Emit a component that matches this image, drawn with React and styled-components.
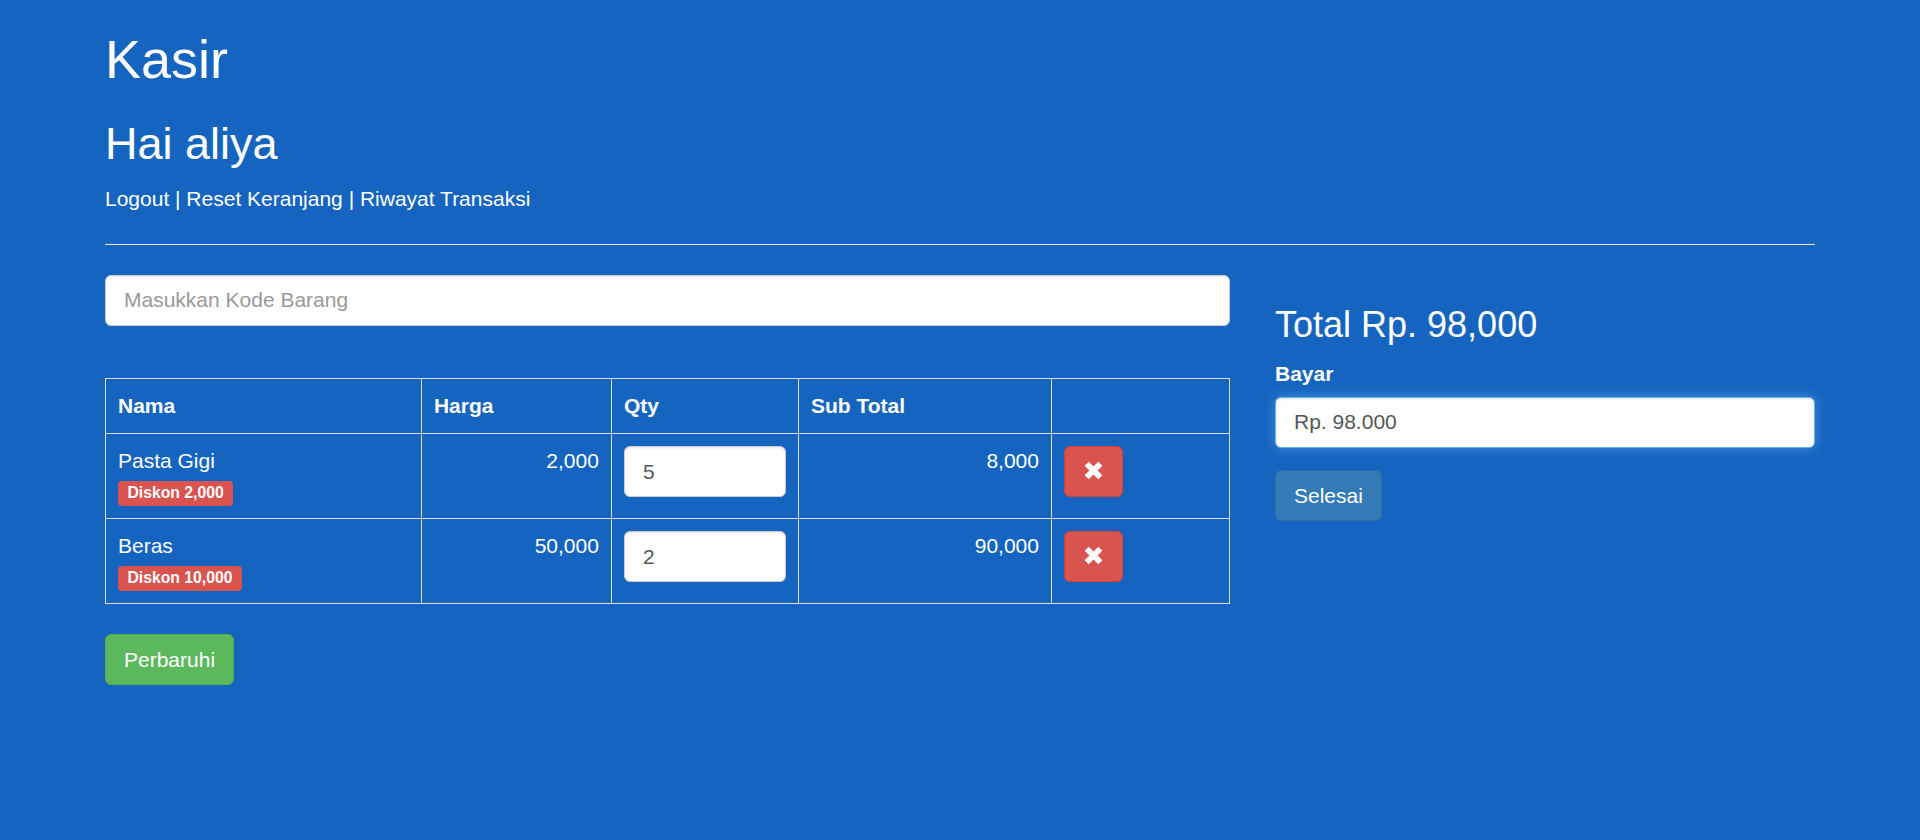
import React, { useEffect, useRef } from "react";
import styled, { createGlobalStyle } from "styled-components";

const GlobalStyle = createGlobalStyle`
  html, body {
    margin: 0;
    padding: 0;
  }
  body {
    background: #1565c0;
    color: #fff;
    font-family: "Liberation Sans", Arial, Helvetica, sans-serif;
    font-size: 21px;
    line-height: 30px;
    min-height: 100vh;
  }
  * { box-sizing: border-box; }
`;

const Container = styled.div`
  width: 1755px;
  margin: 0 auto;
  padding: 0 22.5px;
  overflow: hidden;
`;

const Title = styled.h1`
  font-size: 54px;
  font-weight: 400;
  line-height: 1.1;
  margin: 30px 0 30px;
`;

const Greeting = styled.h2`
  font-size: 45px;
  font-weight: 400;
  line-height: 1.1;
  margin: 0 0 15px;
`;

const NavLinks = styled.div`
  line-height: 30px;
`;

const NavLink = styled.a`
  color: #fff;
  text-decoration: none;
`;

const Divider = styled.hr`
  margin: 30px 0;
  border: 0;
  border-top: 1px solid #eee;
  height: 0;
`;

const Row = styled.div`
  display: flex;
  margin: 0 -22.5px;
`;

const Col = styled.div`
  width: ${(p) => p.$span}%;
  padding: 0 22.5px;
`;

const FormGroup = styled.div`
  margin-bottom: ${(p) => p.$gap || 22.5}px;
`;

const TextInput = styled.input`
  display: block;
  width: 100%;
  height: 51px;
  padding: 9px 18px;
  font-family: inherit;
  font-size: 21px;
  line-height: 30px;
  color: #555;
  background: #fff;
  border: 1px solid ${(p) => (p.$focused ? "#66afe9" : "#ccc")};
  border-radius: 6px;
  box-shadow: ${(p) =>
    p.$focused
      ? "inset 0 1.5px 1.5px rgba(0,0,0,.075), 0 0 12px rgba(102,175,233,.6)"
      : "inset 0 1.5px 1.5px rgba(0,0,0,.075)"};
  outline: none;
  caret-color: #555;
  &::placeholder {
    color: #999;
  }
`;

const Table = styled.table`
  width: 100%;
  border-collapse: collapse;
  table-layout: fixed;
  margin-bottom: 30px;
`;

const HeadCell = styled.th`
  text-align: left;
  font-weight: 700;
  padding: 12px;
  line-height: 30px;
  border: 1px solid #ddd;
  vertical-align: bottom;
`;

const Cell = styled.td`
  padding: 12px;
  line-height: 30px;
  border: 1px solid #ddd;
  vertical-align: top;
  text-align: ${(p) => (p.$right ? "right" : "left")};
`;

const Label = styled.span`
  display: inline;
  background: #d9534f;
  color: #fff;
  font-size: 15.75px;
  font-weight: 700;
  line-height: 1;
  padding: 3.15px 9.45px 4.7px;
  border-radius: 4px;
  white-space: nowrap;
`;

const Button = styled.button`
  display: inline-flex;
  align-items: center;
  justify-content: center;
  font-family: inherit;
  font-size: 21px;
  line-height: 30px;
  padding: 9.5px 18px;
  border-radius: 6px;
  border: 1px solid ${(p) => p.$border};
  background: ${(p) => p.$bg};
  color: #fff;
  cursor: pointer;
`;

const IconButton = styled(Button)`
  width: 59px;
  height: 51px;
  padding: 0 0 2px;
`;

const TotalHeading = styled.h3`
  font-size: 36px;
  font-weight: 400;
  line-height: 1.1;
  margin: 30px 0 15px;
`;

const FieldLabel = styled.label`
  display: inline-block;
  font-weight: 700;
  margin-bottom: 7.5px;
`;

const RemoveIcon = () => (
  <svg width="21" height="21" viewBox="0 0 16 16" aria-hidden="true">
    <path
      d="M2.8 2.8 L13.2 13.2 M13.2 2.8 L2.8 13.2"
      stroke="#fff"
      strokeWidth="4.4"
      strokeLinecap="butt"
      fill="none"
    />
  </svg>
);

const items = [
  { name: "Pasta Gigi", diskon: "2,000", harga: "2,000", qty: 5, sub: "8,000" },
  { name: "Beras", diskon: "10,000", harga: "50,000", qty: 2, sub: "90,000" },
];

export default function App() {
  const payRef = useRef(null);
  useEffect(() => {
    const el = payRef.current;
    if (el) {
      el.focus();
      const n = el.value.length;
      el.setSelectionRange(n, n);
    }
  }, []);

  return (
    <>
      <GlobalStyle />
      <Container>
        <Title>Kasir</Title>
        <Greeting>Hai aliya</Greeting>
        <NavLinks>
          <NavLink href="#">Logout</NavLink> | <NavLink href="#">Reset Keranjang</NavLink> |{" "}
          <NavLink href="#">Riwayat Transaksi</NavLink>
        </NavLinks>
        <Divider />
        <Row>
          <Col $span={66.6667}>
            <FormGroup $gap={52.5}>
              <TextInput placeholder="Masukkan Kode Barang" />
            </FormGroup>
            <Table>
              <colgroup>
                <col style={{ width: "28.11%" }} />
                <col style={{ width: "16.9%" }} />
                <col style={{ width: "16.64%" }} />
                <col style={{ width: "22.51%" }} />
                <col style={{ width: "15.84%" }} />
              </colgroup>
              <tbody>
                <tr>
                  <HeadCell>Nama</HeadCell>
                  <HeadCell>Harga</HeadCell>
                  <HeadCell>Qty</HeadCell>
                  <HeadCell>Sub Total</HeadCell>
                  <HeadCell></HeadCell>
                </tr>
                {items.map((it) => (
                  <tr key={it.name}>
                    <Cell>
                      {it.name}
                      <br />
                      <Label>Diskon {it.diskon}</Label>
                    </Cell>
                    <Cell $right>{it.harga}</Cell>
                    <Cell>
                      <TextInput defaultValue={it.qty} />
                    </Cell>
                    <Cell $right>{it.sub}</Cell>
                    <Cell>
                      <IconButton $bg="#d9534f" $border="#d43f3a" aria-label="Hapus">
                        <RemoveIcon />
                      </IconButton>
                    </Cell>
                  </tr>
                ))}
              </tbody>
            </Table>
            <Button $bg="#5cb85c" $border="#4cae4c">Perbaruhi</Button>
          </Col>
          <Col $span={33.3333}>
            <TotalHeading>Total Rp. 98,000</TotalHeading>
            <FormGroup>
              <FieldLabel>Bayar</FieldLabel>
              <TextInput ref={payRef} $focused defaultValue="Rp. 98.000" />
            </FormGroup>
            <Button $bg="#337ab7" $border="#2e6da4">Selesai</Button>
          </Col>
        </Row>
      </Container>
    </>
  );
}
